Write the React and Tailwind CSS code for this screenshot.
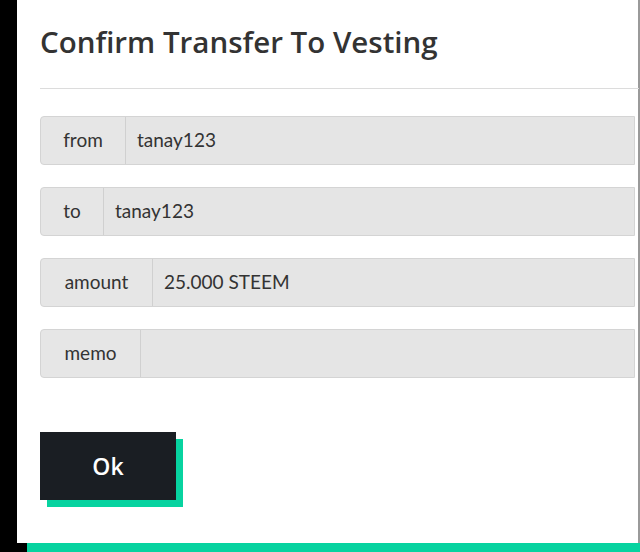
export default function App() {
  const rows = [
    { label: "from", value: "tanay123", w: "w-[85px]" },
    { label: "to", value: "tanay123", w: "w-[63px]" },
    { label: "amount", value: "25.000 STEEM", w: "w-[112px]" },
    { label: "memo", value: "", w: "w-[100px]" },
  ];
  return (
    <div className="w-[640px] h-[552px] bg-black flex flex-col overflow-hidden" style={{ fontFamily: "Lato, 'Open Sans', sans-serif" }}>
      <div className="ml-[17px] h-[543px] bg-white border-r-2 border-[#9a9a9a] pl-[23px] flex flex-col">
        <h1 className="mt-[21px] text-[29.5px] font-semibold text-[#333] leading-[42px]" style={{ fontFamily: "'Open Sans', sans-serif" }}>
          Confirm Transfer To Vesting
        </h1>
        <div className="mt-[25px] h-px bg-[#dcdcdc] -mr-px" />
        <div className="mt-[27px] flex flex-col gap-[22px] pr-[3px]">
          {rows.map((r) => (
            <div key={r.label} className="flex h-[49px] border border-[#d4d4d4] rounded-l-[4px] bg-[#e6e6e6] text-[19px] text-[#333]">
              <div className={`${r.w} flex items-center justify-center border-r border-[#d0d0d0] shrink-0`}>
                {r.label}
              </div>
              <div className="flex-1 flex items-center pl-[11px] bg-[#e5e5e5]">{r.value}</div>
            </div>
          ))}
        </div>
        <div className="mt-[54px] relative w-[136px] h-[68px]">
          <div className="absolute left-[7px] top-[7px] w-[136px] h-[68px] bg-[#07d3a0]" />
          <button className="relative w-[136px] h-[68px] bg-[#1a1e23] text-white text-[23px] font-semibold" style={{ fontFamily: "'Open Sans', sans-serif" }}>
            Ok
          </button>
        </div>
      </div>
      <div className="flex h-[9px]">
        <div className="w-[27px] bg-black" />
        <div className="flex-1 bg-[#07d3a0]" />
      </div>
    </div>
  );
}
